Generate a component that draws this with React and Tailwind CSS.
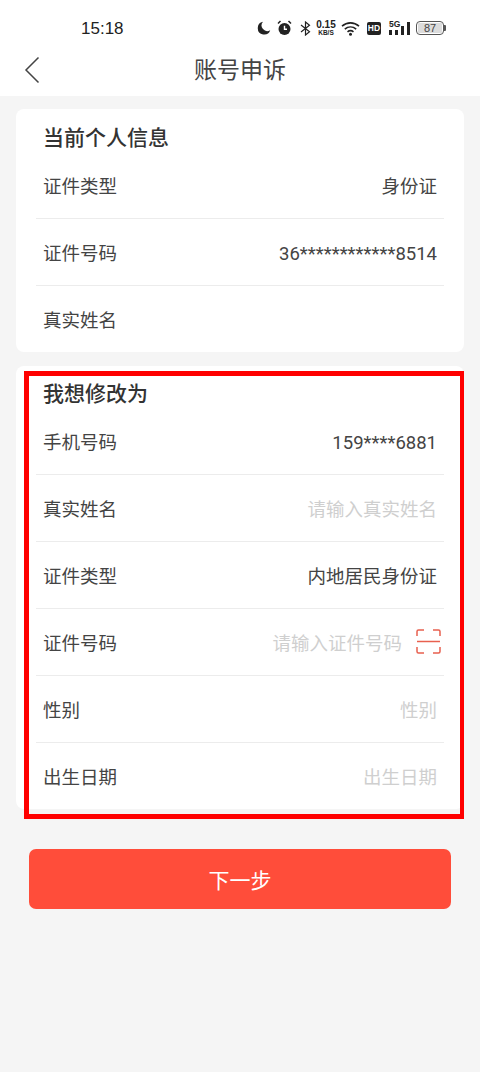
function Row({ label, value, placeholder, last, children }) {
  return (
    <div className={`mx-5 flex items-center justify-between px-[7px] pt-[4px] ${last ? "h-[66px]" : "h-[67px] border-b border-[#ececec]"}`}>
      <span className="text-[18.5px] leading-none text-[#444444]">{label}</span>
      {children ? children : (
        <span className={`text-[18.5px] leading-none ${placeholder ? "text-[#cfcfcf]" : "text-[#444444]"}`}>{value}</span>
      )}
    </div>
  );
}

function StatusIcons() {
  return (
    <div className="flex items-center text-[#222222]">
      <svg width="14" height="14" viewBox="0 0 14 14"><path d="M6 0.8A6.4 6.4 0 1 0 13.2 9.2 5.6 5.6 0 0 1 6 0.8Z" fill="#222" /></svg>
      <svg width="15" height="16" viewBox="0 0 15 16" className="ml-[6px]">
        <circle cx="7.5" cy="9" r="6" fill="#222" />
        <path d="M1 3.5 3.5 1M14 3.5 11.5 1" stroke="#222" strokeWidth="1.5" />
        <path d="M7.5 5.8V9.3H10" stroke="#fff" strokeWidth="1.4" fill="none" />
      </svg>
      <svg width="11" height="15" viewBox="0 0 11 15" className="ml-[8px]">
        <path d="M1 4 9.5 10.8 5.5 14V1L9.5 4.2 1 11" stroke="#222" strokeWidth="1.2" fill="none" />
      </svg>
      <div className="ml-[5px] flex w-[20px] flex-col items-center font-['Liberation_Sans',sans-serif] font-bold leading-none">
        <span className="text-[10px] leading-[9px]">0.15</span>
        <span className="text-[6.5px] leading-[7px]">KB/S</span>
      </div>
      <svg width="19" height="15" viewBox="0 0 19 15" className="ml-[5px]">
        <path d="M1 5.2C6 .8 13 .8 18 5.2M3.8 8.2C7.2 5.2 11.8 5.2 15.2 8.2M6.5 10.8C8.2 9.5 10.8 9.5 12.5 10.8" stroke="#222" strokeWidth="1.6" fill="none" />
        <circle cx="9.5" cy="13.3" r="1.5" fill="#222" />
      </svg>
      <div className="ml-[7px] flex h-[13px] w-[14px] items-center justify-center rounded-[2px] bg-[#222222] font-['Liberation_Sans',sans-serif] text-[8.5px] font-bold leading-none text-white">HD</div>
      <div className="relative ml-[8px] flex h-[14px] w-[21px] items-end gap-[3px]">
        <span className="absolute left-0 top-[-1px] font-['Liberation_Sans',sans-serif] text-[8.5px] font-bold leading-none">5G</span>
        <span className="h-[5px] w-[3px] bg-[#222222]" />
        <span className="h-[5px] w-[3px] bg-[#222222]" />
        <span className="h-[9px] w-[3px] bg-[#222222]" />
        <span className="h-[13px] w-[3px] bg-[#222222]" />
      </div>
      <div className="ml-[6px] flex items-center">
        <div className="flex h-[14px] w-[28px] items-center justify-center rounded-[4px] border border-[#555555] p-[1px]">
          <div className="flex h-full w-full items-center justify-center rounded-[1px] bg-[#dcdcdc] font-['Liberation_Sans',sans-serif] text-[11px] leading-none text-[#444444]">87</div>
        </div>
        <div className="h-[6px] w-[2px] rounded-r-[1px] bg-[#555555]" />
      </div>
    </div>
  );
}

export default function App() {
  return (
    <div className="relative h-[1072px] w-[480px] overflow-hidden bg-[#f5f5f5] font-['Roboto','Noto_Sans_CJK_SC','Noto_Sans',sans-serif]">
      <div className="bg-white">
        <div className="flex h-[48px] items-center justify-between pl-[81px] pr-[34px] pt-[8px]">
          <span className="font-['Liberation_Sans',sans-serif] text-[17px] leading-none text-[#222222]">15:18</span>
          <StatusIcons />
        </div>
        <div className="relative flex h-[48px] items-center justify-center pb-[4px]">
          <svg width="16" height="28" viewBox="0 0 16 28" className="absolute left-[24px] top-[8px]">
            <path d="M14.5 1.5 2 14 14.5 26.5" stroke="#444" strokeWidth="1.5" fill="none" />
          </svg>
          <span className="text-[23px] leading-none text-[#444444]">账号申诉</span>
        </div>
      </div>

      <div className="mx-4 mt-[13px] rounded-[8px] bg-white">
        <div className="flex h-[43px] items-end pb-[3px] pl-[27px] text-[21px] font-medium leading-none text-[#333333]">当前个人信息</div>
        <Row label="证件类型" value="身份证" />
        <Row label="证件号码" value="36************8514" />
        <Row label="真实姓名" last />
      </div>

      <div className="mx-4 mt-[14px] rounded-[8px] bg-white">
        <div className="flex h-[42px] items-end pb-[3px] pl-[27px] text-[21px] font-medium leading-none text-[#333333]">我想修改为</div>
        <Row label="手机号码" value="159****6881" />
        <Row label="真实姓名" value="请输入真实姓名" placeholder />
        <Row label="证件类型" value="内地居民身份证" />
        <Row label="证件号码">
          <div className="flex items-center">
            <span className="text-[18.5px] leading-none text-[#cfcfcf]">请输入证件号码</span>
            <svg width="25" height="25" viewBox="0 0 25 25" className="ml-[14px] mr-[-4px] mt-[-6px]">
              <path d="M1 7V2.5Q1 1 2.5 1H8M17 1H22.5Q24 1 24 2.5V7M1 18V22.5Q1 24 2.5 24H8M17 24H22.5Q24 24 24 22.5V18" stroke="#e8604f" strokeWidth="1.5" fill="none" />
              <path d="M1 12.5H24" stroke="#e8604f" strokeWidth="1.5" />
            </svg>
          </div>
        </Row>
        <Row label="性别" value="性别" placeholder />
        <Row label="出生日期" value="出生日期" placeholder last />
      </div>

      <button className="mx-[29px] mt-[40px] flex h-[60px] w-[422px] items-center justify-center rounded-[7px] bg-[#ff4d3a] pt-[5px] text-[21px] leading-none text-white">下一步</button>

      <div className="absolute left-[24px] top-[371px] h-[448px] w-[440px] border-y-[5px] border-l-[5px] border-r-[4px] border-[#ff0000]" />
    </div>
  );
}
